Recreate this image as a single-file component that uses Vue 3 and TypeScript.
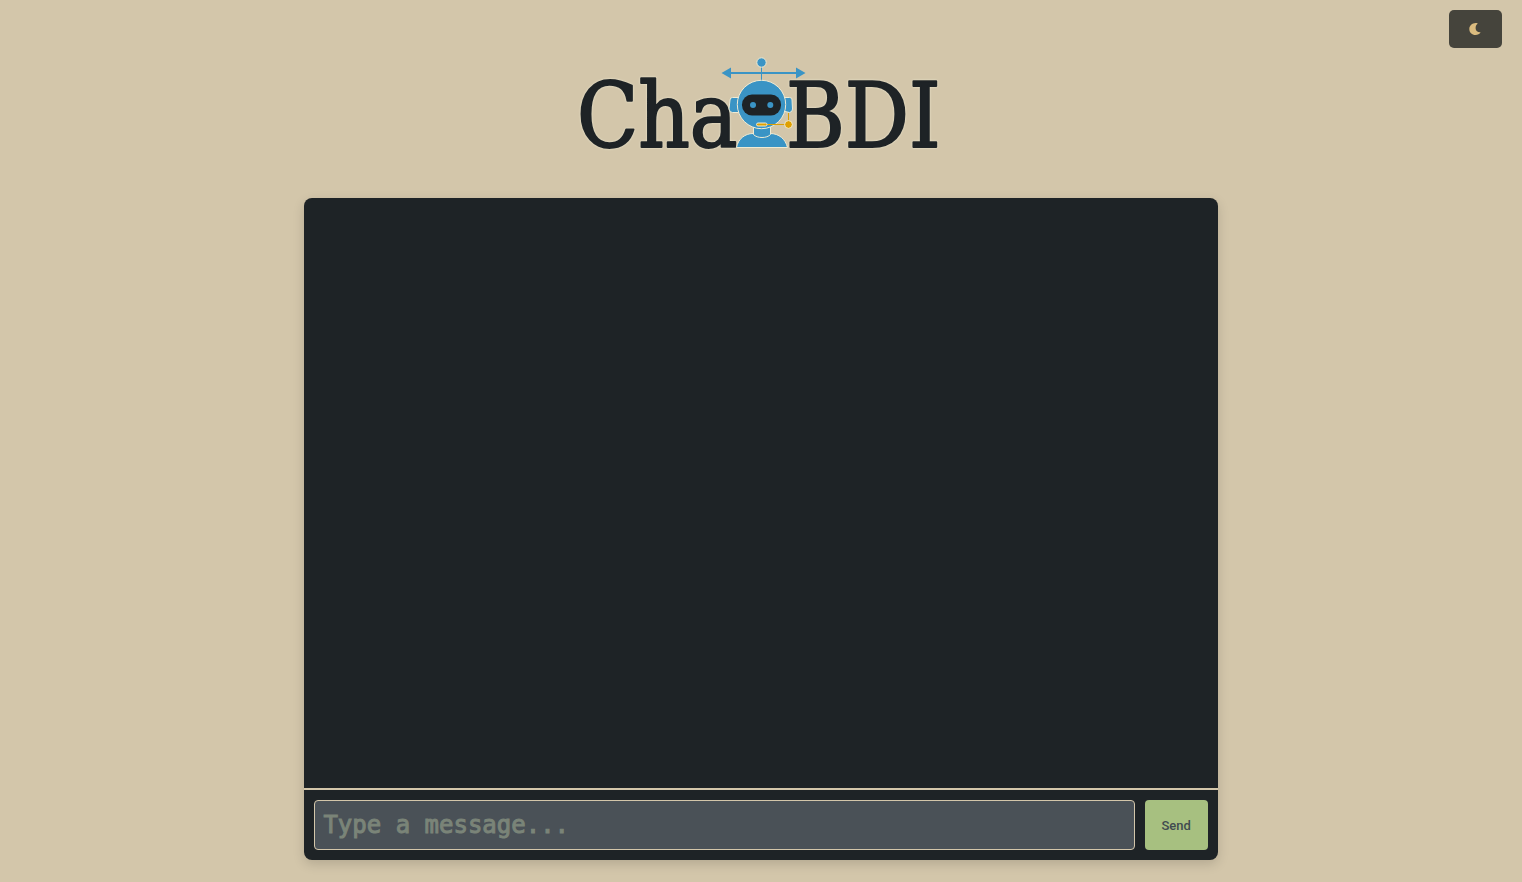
<script setup lang="ts">
import { ref } from 'vue'

const message = ref<string>('')
const messages = ref<string[]>([])
const dimmed = ref<boolean>(false)

function send(): void {
  const text = message.value.trim()
  if (!text) return
  messages.value.push(text)
  message.value = ''
}
</script>

<template>
  <div class="page" :class="{ dimmed }">
    <header class="header">
      <div class="toolbar">
        <button class="theme-toggle" type="button" aria-label="Toggle theme" @click="dimmed = !dimmed">
          <svg class="moon" viewBox="0 0 13 12" aria-hidden="true">
            <path d="M7.600 0C3.600 -.2 .3 2.500 .3 6C.3 9.500 3 12 6.500 12C8.800 12 10.600 11 11.600 9.200C9.200 9.600 6.600 8 6.600 5.200C6.600 3.200 7.200 1.600 8.800 .5Z" />
          </svg>
        </button>
      </div>
      <svg class="logo" viewBox="571 50 380 122" role="img" aria-label="ChatBDI">
        <g class="wordmark">
          <text x="577" y="147">Cha</text>
          <text x="786" y="147">BDI</text>
        </g>
        <g class="arrows">
          <path d="M729 73H798" />
          <path class="tip" d="M721.500 73L731 67.500V78.500ZM805.500 73L796 67.500V78.500Z" />
          <path class="mast" d="M761.500 66V82" />
        </g>
        <g class="robot">
          <circle cx="761.500" cy="62.500" r="4.700" />
          <path d="M736.500 147.500C738 139 745 133.500 753 133.500H770C779 133.500 785.500 139 787.500 147.500Z" />
          <path d="M753.500 124V134.500C757 138.500 767 138.500 770.500 134.500V124Z" />
          <path d="M740 97.500H732.500Q730 97.500 730 100L729 109Q729.500 112.500 732.500 112.500H740ZM783 97.500H789.500Q792.500 97.500 792 100L792.500 109Q792.500 112 789.500 112.500L783 111Z" />
          <circle cx="761.500" cy="104.500" r="24.200" />
        </g>
        <rect class="visor" x="742" y="94.500" width="39" height="21" rx="10" />
        <circle class="eye" cx="753" cy="105" r="3" />
        <circle class="eye" cx="770.300" cy="105" r="3" />
        <path class="mic-line" d="M788.500 113V124.500H766" />
        <rect class="mic" x="756.500" y="123" width="10.500" height="3" rx="1.500" />
        <circle class="mic" cx="788.500" cy="124.500" r="3.900" />
      </svg>
    </header>

    <main class="chat">
      <div class="messages" aria-live="polite">
        <p v-for="(item, index) in messages" :key="index" class="message">{{ item }}</p>
      </div>
      <div class="divider"></div>
      <form class="composer" @submit.prevent="send">
        <input v-model="message" class="field" type="text" aria-label="Message" placeholder="Type a message..." autocomplete="off" />
        <button class="send" type="submit">Send</button>
      </form>
    </main>
  </div>
</template>

<style>
body {
  background: #d3c6aa;
}
</style>

<style scoped>
.page {
  box-sizing: border-box;
  min-height: 100vh;
  display: flex;
  flex-direction: column;
  align-items: center;
  background: #d3c6aa;
  font-family: Roboto, "Liberation Sans", sans-serif;
}
.page.dimmed {
  background: #9da9a0;
}
.header {
  align-self: stretch;
  display: flex;
  flex-direction: column;
  align-items: center;
}
.toolbar {
  align-self: stretch;
  display: flex;
  justify-content: flex-end;
  padding: 10px 20px 2px;
}
.theme-toggle {
  display: flex;
  align-items: center;
  justify-content: center;
  padding: 13px 20px;
  border: 0;
  border-radius: 5px;
  background: #45443c;
  cursor: pointer;
}
.moon {
  width: 13px;
  height: 12px;
  fill: #dbbc7f;
}
.logo {
  width: 380px;
  max-width: 100%;
  margin-bottom: 26px;
}
.wordmark {
  font-family: "DejaVu Serif Condensed", "DejaVu Serif", serif;
  font-stretch: condensed;
  font-size: 89px;
  fill: #1e2326;
  stroke: #1e2326;
  stroke-width: 2px;
  stroke-linejoin: round;
  filter: drop-shadow(0 0 1px #efebd4);
}
.arrows {
  fill: none;
  stroke: #3a94c5;
  stroke-width: 2px;
}
.arrows .tip {
  fill: #3a94c5;
  stroke: none;
}
.arrows .mast {
  stroke-width: 1px;
}
.robot {
  fill: #3a94c5;
  stroke: #efebd4;
  stroke-width: 1px;
}
.visor {
  fill: #1e2326;
}
.eye {
  fill: #3a94c5;
}
.mic-line {
  fill: none;
  stroke: #dfa000;
  stroke-width: 1px;
}
.mic {
  fill: #dfa000;
  stroke: #efebd4;
  stroke-width: 1px;
}
.chat {
  width: 60%;
  height: 75vh;
  display: flex;
  flex-direction: column;
  overflow: hidden;
  border-radius: 8px;
  background: #1e2326;
  box-shadow: 0 4px 12px rgba(0, 0, 0, 0.15);
}
.messages {
  flex: 1;
  overflow-y: auto;
}
.message {
  margin: 10px;
  color: #d3c6aa;
  overflow-wrap: anywhere;
}
.divider {
  height: 2px;
  background: #d3c6aa;
}
.composer {
  display: flex;
  gap: 10px;
  padding: 10px;
}
.field {
  box-sizing: border-box;
  flex: 1;
  min-width: 0;
  height: 50px;
  padding: 0 8px;
  border: 1px solid #d3c6aa;
  border-radius: 4px;
  outline: 0;
  background: #4a5157;
  color: #d3c6aa;
  font-family: "DejaVu Sans Mono", "Liberation Mono", monospace;
  font-size: 24px;
}
.field::placeholder {
  color: #7a8478;
  opacity: 1;
  -webkit-text-stroke: 1px #7a8478;
}
.send {
  min-width: 63px;
  padding: 1px 16px 0;
  border: 0;
  border-radius: 4px;
  background: #a7c080;
  color: #414b50;
  font-family: inherit;
  font-size: 13px;
  font-weight: 500;
  cursor: pointer;
}
</style>
